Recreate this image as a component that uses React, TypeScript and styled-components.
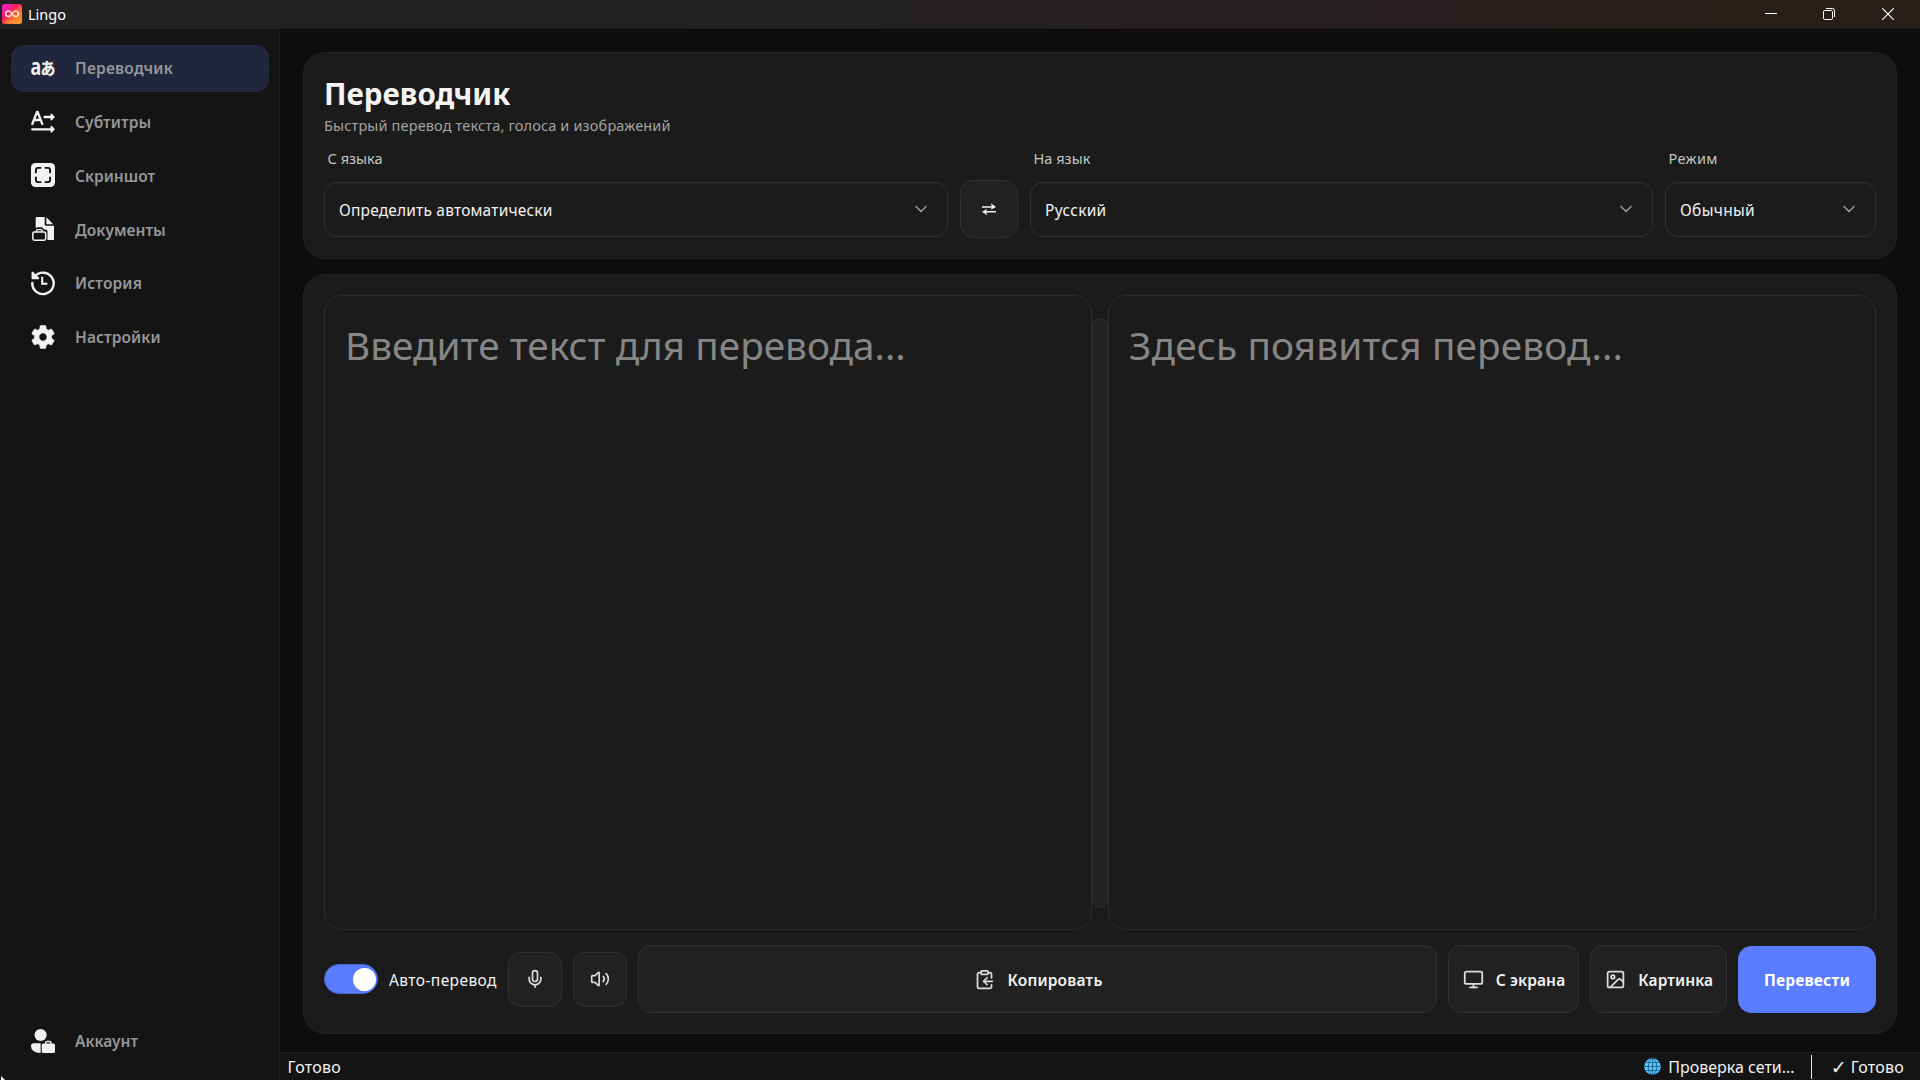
import React from "react";
import styled, { createGlobalStyle } from "styled-components";
import { ChevronDown, ClipboardCopy, Image as ImageIcon, Mic, Monitor, Volume2 } from "lucide-react";

const Global = createGlobalStyle`
  * { box-sizing: border-box; }
  html, body, #root { height: 100%; }
  body {
    margin: 0;
    overflow: hidden;
    background: #0d0d0d;
    font-family: "Noto Sans", "Open Sans", "Noto Sans CJK JP", sans-serif;
    font-size: 15.5px;
    color: #f2f2f2;
  }
  button { font: inherit; color: inherit; }
`;

const Window = styled.div`
  position: relative;
  display: flex;
  flex-direction: column;
  width: 1920px;
  height: 1080px;
`;

const TitleBar = styled.header`
  display: flex;
  align-items: center;
  flex: 0 0 29px;
  padding: 0 3px 0 2px;
  background: linear-gradient(90deg, #212122 0%, #222122 35%, #261e1f 72%, #271e1a 90%);

  > svg {
    margin-top: -1px;
  }
`;

const AppName = styled.span`
  flex: 1;
  margin-left: 6px;
  padding-bottom: 1px;
  font-size: 14.5px;
  color: #fff;
`;

const WindowButton = styled.span`
  display: flex;
  align-items: center;
  justify-content: center;
  width: 58.5px;
  height: 28px;
  margin-top: -1px;
`;

const Body = styled.div`
  display: flex;
  flex: 1;
  min-height: 0;
`;

const Sidebar = styled.nav`
  display: flex;
  flex-direction: column;
  gap: 6.25px;
  width: 280px;
  padding: 15.5px 10px 15px 11px;
  background: #141414;
  border-right: 1px solid #1f1f1f;
`;

const NavItem = styled.a<{ $active?: boolean; $bottom?: boolean }>`
  display: flex;
  align-items: center;
  gap: 20px;
  height: 47.5px;
  padding-left: 20px;
  margin-top: ${(p) => (p.$bottom ? "auto" : "0")};
  border-radius: 13px;
  background: ${(p) => (p.$active ? "#20263b" : "transparent")};
  color: #f2f2f2;

  svg {
    flex: none;
    margin-top: -1px;
    overflow: visible;
  }
`;

const NavLabel = styled.span<{ $ls: number }>`
  font-weight: 600;
  color: #97979b;
  letter-spacing: ${(p) => p.$ls}px;
`;

const Main = styled.main`
  display: flex;
  flex-direction: column;
  flex: 1;
  min-width: 0;
`;

const Content = styled.div`
  display: flex;
  flex-direction: column;
  flex: 1;
  gap: 15px;
  padding: 23px 23px 18px 23px;
`;

const Card = styled.section`
  display: flex;
  flex-direction: column;
  padding: 20px;
  background: #1b1b1b;
  border: 1px solid #222;
  border-radius: 22px;
`;

const HeaderCard = styled(Card)`
  height: 207px;
`;

const WorkCard = styled(Card)`
  flex: 1;
`;

const Title = styled.h1`
  margin: 1px 0 0;
  font-size: 29.5px;
  line-height: 40px;
  font-weight: 700;
  letter-spacing: 0.05px;
  color: #f4f4f4;
`;

const Subtitle = styled.p`
  margin: 0;
  line-height: 22px;
  font-size: 14.5px;
  letter-spacing: 0.15px;
  color: #a3a3a3;
`;

const Fields = styled.div`
  display: grid;
  grid-template-columns: 624px 58px 623px 211px;
  column-gap: 12px;
  margin-top: 11px;
`;

const Field = styled.div`
  display: flex;
  flex-direction: column;
  gap: 13px;
`;

const FieldLabel = styled.label<{ $ls?: number }>`
  height: 22px;
  line-height: 22px;
  padding-left: 3.6px;
  font-size: 14.5px;
  letter-spacing: ${(p) => p.$ls ?? 0}px;
  color: #c4c4c4;
`;

const Select = styled.div`
  display: flex;
  align-items: center;
  justify-content: space-between;
  height: 55px;
  padding: 1px 16.5px 0 14px;
  border: 1px solid #303030;
  border-radius: 13px;

  svg {
    margin-top: -2px;
    color: #94949a;
  }
`;

const ToolButton = styled.button<{ $w?: number; $h: number; $shift?: number }>`
  display: flex;
  align-items: center;
  justify-content: center;
  gap: 12px;
  flex: ${(p) => (p.$w ? "none" : "1")};
  width: ${(p) => (p.$w ? p.$w + "px" : "auto")};
  height: ${(p) => p.$h}px;
  padding: 0 0 0 ${(p) => p.$shift ?? 0}px;
  border: 1px solid #303030;
  border-radius: 13px;
  background: #212121;
  font-weight: 600;

  svg {
    flex: none;
    color: #dcdcdc;
  }
`;

const PrimaryButton = styled(ToolButton)`
  border-color: #5a7dff;
  background: #5a7dff;
  font-weight: 700;
  color: #fff;
`;

const SwapButton = styled(ToolButton)`
  align-self: end;
  margin-bottom: -1px;
`;

const Panes = styled.div`
  display: flex;
  align-items: center;
  height: 635px;
`;

const Pane = styled.div`
  flex: 1;
  height: 100%;
  padding: 22px 20px;
  border: 1px solid #2c2c2c;
  border-radius: 18px;
  font-size: 38.75px;
  line-height: 54px;
  color: #868686;
`;

const Splitter = styled.div`
  width: 16px;
  height: 590px;
  border: 1px solid #2a2a2a;
  border-radius: 8px;
  background: #222;
`;

const Toolbar = styled.div`
  display: flex;
  align-items: center;
  gap: 11px;
  margin-top: 15px;
`;

const Switch = styled.span`
  display: flex;
  align-items: center;
  justify-content: flex-end;
  width: 54px;
  height: 30px;
  padding-right: 1px;
  border: 1px solid #4a66cf;
  border-radius: 15px;
  background: #5a7dff;
`;

const Knob = styled.span`
  width: 23px;
  height: 23px;
  border-radius: 50%;
  background: #fff;
`;

const Text = styled.span<{ $ls?: number }>`
  letter-spacing: ${(p) => p.$ls ?? 0}px;
  white-space: nowrap;
`;

const ToolText = styled(Text)`
  padding-top: 2px;
`;

const SwitchLabel = styled(ToolText)`
  width: 108px;
`;

const StatusBar = styled.footer`
  display: flex;
  align-items: center;
  height: 28px;
  padding: 0 16px 0 7.6px;
  background: #141414;
  border-top: 1px solid #1f1f1f;
  font-size: 16px;
`;

const Spacer = styled.span`
  flex: 1;
`;

const NetworkState = styled.span`
  display: flex;
  align-items: center;
  gap: 7.5px;
`;

const Divider = styled.span`
  width: 1px;
  height: 24px;
  margin: 0 21px 0 16px;
  background: #e8e8e8;
`;

const CheckMark = styled.span`
  width: 19px;
  margin-left: -2px;
  margin-right: 1px;
  font-family: "DejaVu Sans", sans-serif;
  font-size: 19px;
  line-height: 20px;
`;

const Pointer = styled.svg`
  position: absolute;
  left: 1px;
  bottom: 0;
`;

const LogoIcon = () => (
  <svg width="20" height="20" viewBox="0 0 20 20">
    <defs>
      <linearGradient id="logoBase" x1="0" y1="0" x2="1" y2="1">
        <stop offset="0" stopColor="#f01ff0" />
        <stop offset="0.4" stopColor="#fb1f5c" />
        <stop offset="0.65" stopColor="#f7772b" />
        <stop offset="1" stopColor="#f6a421" />
      </linearGradient>
    </defs>
    <rect width="20" height="20" rx="2.5" fill="url(#logoBase)" />
    <path
      d="M10 9.8C8.8 8 7.800 7 6.500 7a2.800 2.800 0 0 0 0 5.600c1.300 0 2.300-1 3.500-2.800S12.200 7 13.500 7a2.800 2.800 0 0 1 0 5.600c-1.300 0-2.300-1-3.500-2.800z"
      fill="none"
      stroke="#ffe3cf"
      strokeWidth="1.5"
    />
    <text x="10" y="19" fontSize="4.5" textAnchor="middle" fill="#ffb27a" opacity="0.6">
      Lingo
    </text>
  </svg>
);

const TranslatorIcon = () => (
  <svg width="24" height="24" viewBox="0 0 24 24" fill="currentColor">
    <text fontSize="24" fontWeight="700" transform="translate(-0.6 18.8) scale(0.74 1)" fontFamily="Noto Sans">
      a
    </text>
    <text
      fontSize="16.5"
      fontWeight="700"
      transform="translate(9.5 18.5) scale(0.9 1)"
      fontFamily="Noto Sans CJK JP"
      stroke="currentColor"
      strokeWidth="0.3"
    >
      あ
    </text>
  </svg>
);

const SubtitlesIcon = () => (
  <svg
    width="24"
    height="24"
    viewBox="0 0 24 24"
    fill="none"
    stroke="currentColor"
    strokeWidth="2.3"
    strokeLinecap="round"
    strokeLinejoin="round"
  >
    <path d="M1.300 14 6 1.800h.6L11.300 14M3 10h6.600" />
    <path d="M13.500 7H21M1.200 19.300H21" />
    <path d="M20.300 4.300v5.400L23 7zM20.300 16.600v5.400l2.700-2.700z" fill="currentColor" strokeWidth="1.5" />
  </svg>
);

const ScreenshotIcon = () => (
  <svg width="24" height="24" viewBox="0 0 24 24" fill="none">
    <rect width="24" height="24" rx="4.5" fill="currentColor" />
    <path
      d="M10.300 4.900H7a2.100 2.100 0 0 0-2.100 2.100v3.300M13.700 4.900H17a2.100 2.100 0 0 1 2.100 2.100v3.300M10.300 19.100H7A2.100 2.100 0 0 1 4.900 17v-3.300M13.700 19.100H17a2.100 2.100 0 0 0 2.100-2.100v-3.300"
      stroke="#141414"
      strokeWidth="1.9"
    />
  </svg>
);

const DocumentsIcon = () => (
  <svg width="24" height="24" viewBox="0 0 24 24" fill="currentColor">
    <path d="M4.700 1.200Q4.700 0 6 0h7.700v7.200q0 1.500 1.500 1.500H23v13.200q0 1.200-1.200 1.200h-5.300V14.500q0-2-2-2h-1.700q-.4-2.200-2.600-2.200H6.600q-1.200 0-1.900.8z" />
    <path d="M15.400.3 22.200 7.200H15.400z" />
    <rect x="1.8" y="15" width="12.9" height="8.2" rx="1.6" fill="none" stroke="currentColor" strokeWidth="1.5" />
    <path d="M5.400 15v-1.200q0-1.200 1.200-1.200h3.300q1.200 0 1.200 1.200V15" fill="none" stroke="currentColor" strokeWidth="1.4" />
  </svg>
);

const HistoryIcon = () => (
  <svg width="24" height="24" viewBox="0 0 24 24" fill="none" stroke="currentColor" strokeLinecap="round">
    <path d="M3.400 6A10.700 10.700 0 1 1 1.300 12" strokeWidth="2.4" />
    <path d="M1.400 1.300v6h6z" fill="currentColor" strokeWidth="1.7" strokeLinejoin="round" />
    <path d="M11.200 6.800v6h4.200" strokeWidth="2" strokeLinecap="square" />
  </svg>
);

const SettingsIcon = () => (
  <svg width="24" height="24" viewBox="2 2 20 20" fill="currentColor" stroke="currentColor" strokeWidth="0.4">
    <path d="M19.140 12.940c.040-.300.060-.610.060-.940 0-.320-.020-.640-.070-.940l2.030-1.580c.180-.140.230-.410.120-.610l-1.920-3.320c-.120-.220-.370-.290-.590-.220l-2.390.960c-.500-.380-1.030-.700-1.620-.940l-.360-2.540c-.040-.240-.240-.410-.480-.410h-3.840c-.240 0-.430.170-.470.410l-.360 2.540c-.590.240-1.130.570-1.620.940l-2.390-.960c-.220-.080-.470 0-.590.220L2.740 8.870c-.120.210-.080.470.120.610l2.030 1.580c-.050.300-.090.630-.090.940s.020.640.070.940l-2.030 1.580c-.180.140-.230.410-.120.610l1.920 3.320c.120.220.370.290.590.220l2.390-.960c.500.380 1.030.700 1.620.940l.360 2.540c.050.240.240.410.480.410h3.840c.240 0 .440-.170.470-.410l.360-2.540c.590-.240 1.130-.560 1.620-.940l2.390.960c.220.080.470 0 .590-.220l1.920-3.320c.120-.220.070-.470-.120-.610l-2.010-1.580zM12 15.300c-1.820 0-3.300-1.480-3.300-3.300s1.480-3.300 3.300-3.300 3.300 1.480 3.300 3.300-1.480 3.300-3.300 3.300z" />
  </svg>
);

const AccountIcon = () => (
  <svg width="24" height="24" viewBox="0 0 24 24" fill="currentColor">
    <circle cx="9.6" cy="6" r="6.1" />
    <path d="M0 17q0-2.800 2.800-2.800H9.600V24Q0 23.600 0 17z" />
    <rect x="10.7" y="14.6" width="13.3" height="9.4" rx="1.7" />
    <path d="M14.700 15.200v-1.400q0-1.300 1.300-1.300h2.700q1.300 0 1.300 1.300v1.400" fill="none" stroke="currentColor" strokeWidth="1.4" />
  </svg>
);

const SwapIcon = () => (
  <svg width="16" height="14" viewBox="0 0 16 14" fill="none" stroke="#f4f4f4" strokeWidth="1.4">
    <path d="M1 5h12M3 9.800h12" />
    <path d="M9.800 1.300 15 5l-5.200 2.700 1.200-2.700zM6.200 7.100 1 9.800l5.200 3.400-1.200-3.400z" fill="#f4f4f4" stroke="none" />
  </svg>
);

const GlobeIcon = () => (
  <svg width="17" height="17" viewBox="0 0 17 17">
    <circle cx="8.5" cy="8.5" r="8.3" fill="#55c4f8" />
    <g fill="none" stroke="#17567f" strokeWidth="0.8">
      <ellipse cx="8.5" cy="8.5" rx="4.2" ry="8" />
      <path d="M8.500.3v16.400M.3 8.500h16.400M1.600 4.500h13.800M1.600 12.500h13.800" />
    </g>
  </svg>
);

const NAV = [
  { label: "Переводчик", ls: 0.25, Icon: TranslatorIcon },
  { label: "Субтитры", ls: 0.1, Icon: SubtitlesIcon },
  { label: "Скриншот", ls: 0, Icon: ScreenshotIcon },
  { label: "Документы", ls: 0.05, Icon: DocumentsIcon },
  { label: "История", ls: 0.15, Icon: HistoryIcon },
  { label: "Настройки", ls: 0.1, Icon: SettingsIcon },
];

export default function App() {
  return (
    <Window>
      <Global />
      <TitleBar>
        <LogoIcon />
        <AppName>Lingo</AppName>
        <WindowButton>
          <svg width="12" height="12" stroke="#fff" fill="none">
            <path d="M0 5.500h12" />
          </svg>
        </WindowButton>
        <WindowButton>
          <svg width="12" height="12" stroke="#fff" fill="none">
            <rect x="0.5" y="2.5" width="9" height="9" rx="1.2" />
            <path d="M3 .5h6.500a2 2 0 0 1 2 2V9" />
          </svg>
        </WindowButton>
        <WindowButton>
          <svg width="12" height="12" stroke="#fff" strokeWidth="1.2" fill="none">
            <path d="M.3.3l11.400 11.400M11.700.3.3 11.700" />
          </svg>
        </WindowButton>
      </TitleBar>
      <Body>
        <Sidebar>
          {NAV.map(({ label, ls, Icon }, i) => (
            <NavItem key={label} $active={i === 0}>
              <Icon />
              <NavLabel $ls={ls}>{label}</NavLabel>
            </NavItem>
          ))}
          <NavItem $bottom>
            <AccountIcon />
            <NavLabel $ls={0}>Аккаунт</NavLabel>
          </NavItem>
        </Sidebar>
        <Main>
          <Content>
            <HeaderCard>
              <Title>Переводчик</Title>
              <Subtitle>Быстрый перевод текста, голоса и изображений</Subtitle>
              <Fields>
                <Field>
                  <FieldLabel>С языка</FieldLabel>
                  <Select>
                    <Text $ls={0.18}>Определить автоматически</Text>
                    <ChevronDown size={20} />
                  </Select>
                </Field>
                <SwapButton $w={58} $h={58}>
                  <SwapIcon />
                </SwapButton>
                <Field>
                  <FieldLabel>На язык</FieldLabel>
                  <Select>
                    <Text $ls={0.3}>Русский</Text>
                    <ChevronDown size={20} />
                  </Select>
                </Field>
                <Field>
                  <FieldLabel $ls={0.35}>Режим</FieldLabel>
                  <Select>
                    <Text $ls={0.3}>Обычный</Text>
                    <ChevronDown size={20} />
                  </Select>
                </Field>
              </Fields>
            </HeaderCard>
            <WorkCard>
              <Panes>
                <Pane>Введите текст для перевода...</Pane>
                <Splitter />
                <Pane>
                  <Text $ls={0.15}>Здесь появится перевод...</Text>
                </Pane>
              </Panes>
              <Toolbar>
                <Switch>
                  <Knob />
                </Switch>
                <SwitchLabel $ls={0.42}>Авто-перевод</SwitchLabel>
                <ToolButton $w={54} $h={55}>
                  <Mic size={20} />
                </ToolButton>
                <ToolButton $w={54} $h={55}>
                  <Volume2 size={20} />
                </ToolButton>
                <ToolButton $h={68} $shift={2}>
                  <ClipboardCopy size={21} />
                  <ToolText $ls={0.2}>Копировать</ToolText>
                </ToolButton>
                <ToolButton $w={131} $h={68} $shift={1}>
                  <Monitor size={21} />
                  <ToolText $ls={0.12}>С экрана</ToolText>
                </ToolButton>
                <ToolButton $w={137} $h={68} $shift={1.5}>
                  <ImageIcon size={21} />
                  <ToolText $ls={0.1}>Картинка</ToolText>
                </ToolButton>
                <PrimaryButton $w={138} $h={67}>
                  <ToolText $ls={0.2}>Перевести</ToolText>
                </PrimaryButton>
              </Toolbar>
            </WorkCard>
          </Content>
          <StatusBar>
            <Text $ls={0.2}>Готово</Text>
            <Spacer />
            <NetworkState>
              <GlobeIcon />
              <Text>Проверка сети...</Text>
            </NetworkState>
            <Divider />
            <CheckMark>✓</CheckMark>
            <Text $ls={0.2}>Готово</Text>
          </StatusBar>
        </Main>
      </Body>
      <Pointer width="4" height="4" fill="#fff">
        <path d="M0 0l4 4H0z" />
      </Pointer>
    </Window>
  );
}
